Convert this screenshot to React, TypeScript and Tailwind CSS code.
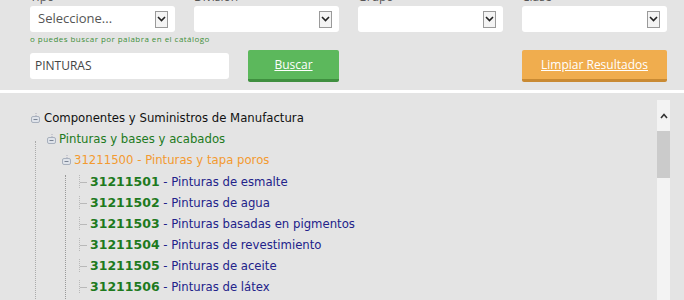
import React from "react";

const filtros = [
    { label: "Tipo", value: "Seleccione..." },
    { label: "División", value: "" },
    { label: "Grupo", value: "" },
    { label: "Clase", value: "" },
];

const hojas = [
    { code: "31211501", name: "Pinturas de esmalte" },
    { code: "31211502", name: "Pinturas de agua" },
    { code: "31211503", name: "Pinturas basadas en pigmentos" },
    { code: "31211504", name: "Pinturas de revestimiento" },
    { code: "31211505", name: "Pinturas de aceite" },
    { code: "31211506", name: "Pinturas de látex" },
];

const SelectBox: React.FC<{ value: string }> = ({ value }) => (
    <div className="flex h-[26px] items-center justify-between rounded-[3px] bg-white pl-[8px] pr-[7px] text-[13px] text-[#555]">
        <span>{value}</span>
        <span className="flex h-[17px] w-[13px] items-center justify-center border border-[#9a9a9a] bg-[#f4f4f4]">
            <svg width="9" height="6" viewBox="0 0 9 6">
                <path d="M1 1 L4.5 4.5 L8 1" fill="none" stroke="#222" strokeWidth="1.6" />
            </svg>
        </span>
    </div>
);

const MinusIcon: React.FC = () => (
    <svg width="10" height="11" viewBox="0 0 10 11" className="shrink-0">
        <path d="M5 0 V3" stroke="#aab" strokeWidth="1" strokeDasharray="1 1" />
        <rect x="0.5" y="3.5" width="8" height="6" rx="1.5" fill="#dfe3ea" stroke="#a8b0bd" />
        <path d="M2.5 6.5 H6.5" stroke="#7a8494" strokeWidth="1" />
    </svg>
);

const Leaf: React.FC = () => (
    <svg width="10" height="13" viewBox="0 0 10 13" className="shrink-0">
        <path d="M1.5 0 V13" stroke="#b9b9b9" strokeWidth="1" strokeDasharray="1 1" />
        <path d="M2 7.5 H9" stroke="#b9b9b9" strokeWidth="1" />
    </svg>
);

export default function App() {
    return (
        <div className="h-[300px] w-[684px] overflow-hidden bg-[#e4e4e4] font-['Open_Sans',sans-serif]">
            <div className="pl-[30px] pr-[17px]">
                <div className="-mt-[9px] grid grid-cols-4 gap-x-[19px]">
                    {filtros.map(f => (
                        <div key={f.label}>
                            <div className="h-[15px] text-[12px] leading-[11px] text-[#555]">{f.label}</div>
                            <SelectBox value={f.value} />
                        </div>
                    ))}
                </div>
                <div className="mt-[1px] text-[8px] leading-[12px] tracking-[0.45px] text-[#3f8f3a]">
                    o puedes buscar por palabra en el catálogo
                </div>
                <div className="mt-[5px] grid grid-cols-4 gap-x-[19px]">
                    <div className="col-span-1 flex items-start pt-[3px]">
                        <div className="flex h-[26px] w-[199px] shrink-0 items-center rounded-[3px] bg-white pl-[5px] text-[12px] text-[#444]">
                            PINTURAS
                        </div>
                    </div>
                    <div className="col-span-2 flex">
                        <button className="ml-[54px] h-[32px] w-[91px] rounded-[2px] border-b-[3px] border-[#3f8f3f] bg-[#5cb85c] text-[12px] text-white underline">
                            Buscar
                        </button>
                    </div>
                    <button className="h-[32px] rounded-[2px] border-b-[3px] border-[#c98a33] bg-[#f0ad4e] text-[12px] text-white underline">
                        Limpiar Resultados
                    </button>
                </div>
            </div>

            <div className="mt-[8px] h-[3px] bg-white" />

            <div className="flex">
                <div className="flex-1 pl-[31px] pt-[15px] font-['DejaVu_Sans',sans-serif] text-[11.7px] leading-[21px]">
                    <div className="flex h-[21px] items-center gap-[3px] text-[#111]">
                        <MinusIcon />
                        <span>Componentes y Suministros de Manufactura</span>
                    </div>
                    <div className="flex">
                        <div className="w-[16px] shrink-0 pl-[4px]">
                            <div className="mt-[12px] h-[200px] border-l border-dotted border-[#aaa]" />
                        </div>
                        <div>
                            <div className="flex h-[21px] items-center gap-[2px] text-[#217a21]">
                                <MinusIcon />
                                <span>Pinturas y bases y acabados</span>
                            </div>
                            <div className="flex">
                                <div className="w-[15px] shrink-0" />
                                <div>
                                    <div className="flex h-[21px] items-center gap-[2px] text-[#f39a30]">
                                        <MinusIcon />
                                        <span>31211500 - Pinturas y tapa poros</span>
                                    </div>
                                    <div className="flex">
                                        <div className="w-[5px] shrink-0 pl-[3px]">
                                            <div className="mt-[4px] h-[150px] border-l border-dotted border-[#999]" />
                                        </div>
                                        <div className="pl-[11px]">
                                            {hojas.map(h => (
                                                <div key={h.code} className="flex h-[21px] items-center gap-[2px]">
                                                    <Leaf />
                                                    <span className="leading-[21px]">
                                                        <b className="text-[12.5px] text-[#1e7a1e]">{h.code}</b>
                                                        <span className="text-[#22228a]"> - {h.name}</span>
                                                    </span>
                                                </div>
                                            ))}
                                        </div>
                                    </div>
                                </div>
                            </div>
                        </div>
                    </div>
                </div>
                <div className="mr-[14px] mt-[7px] flex h-[200px] w-[13px] flex-col bg-[#f3f3f3]">
                    <div className="flex h-[31px] items-center justify-center">
                        <svg width="8" height="6" viewBox="0 0 8 6">
                            <path d="M1 5 L4 1.5 L7 5" fill="none" stroke="#333" strokeWidth="1.6" />
                        </svg>
                    </div>
                    <div className="h-[47px] bg-[#cbcbcb]" />
                </div>
            </div>
        </div>
    );
}
